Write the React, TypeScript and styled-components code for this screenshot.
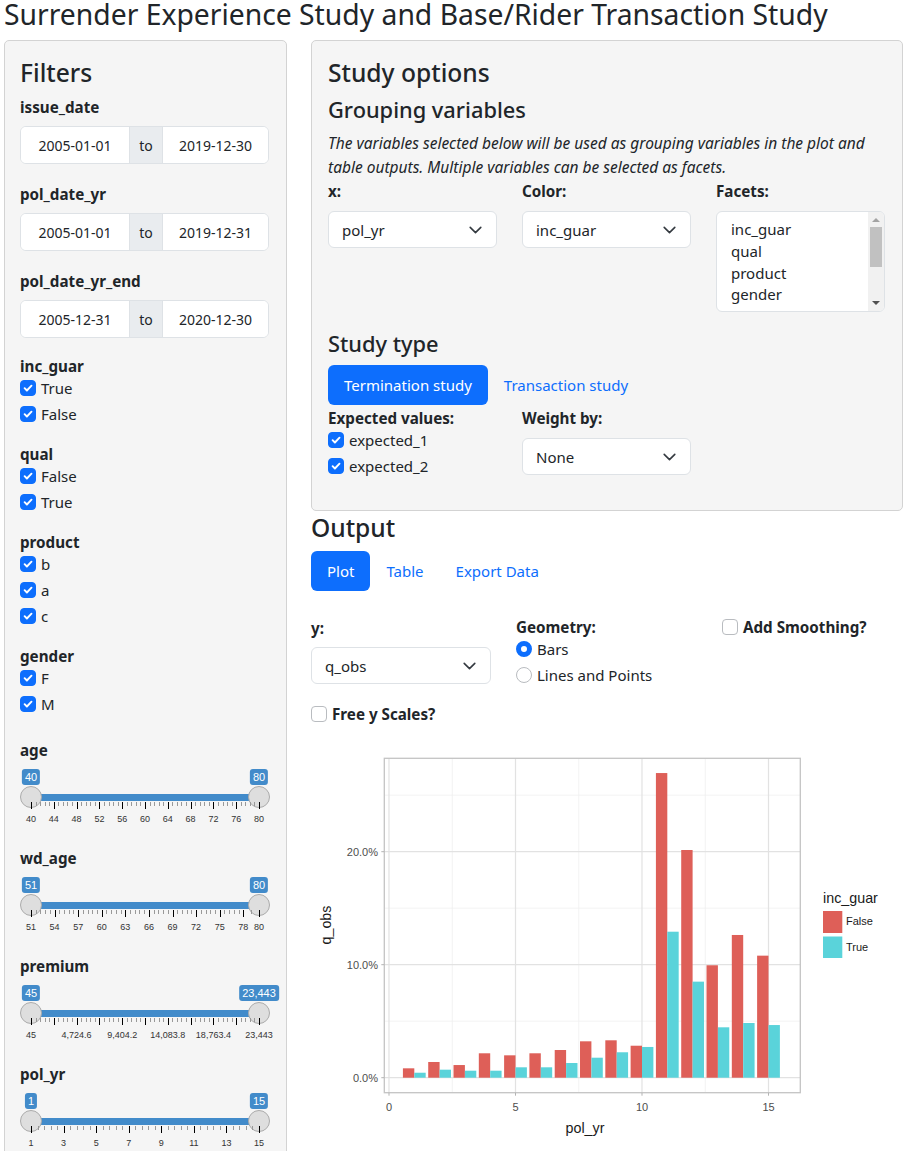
import React from "react";
import styled, { createGlobalStyle } from "styled-components";

const GlobalStyle = createGlobalStyle`
  * { box-sizing: border-box; }
  body {
    margin: 0;
    font-family: "Noto Sans", "Open Sans", sans-serif;
    font-size: 15px;
    color: #212529;
    background: #fff;
  }
`;

type Tick = { at: number; label?: string; major?: boolean };

const range = (n: number) => Array.from({ length: n }, (_, i) => i);

// major ticks from the given list, small ticks spread between them
const buildTicks = (majors: { at: number; label?: string }[]): Tick[] => {
  const out: Tick[] = [];
  majors.forEach((m, i) => {
    out.push({ ...m, major: true });
    const next = majors[i + 1];
    if (!next) return;
    const span = next.at - m.at;
    const parts = span * 228 > 18 ? 5 : 2;
    for (let k = 1; k < parts; k++) out.push({ at: m.at + (span * k) / parts });
  });
  return out;
};

const premiumLabels = ["45", "4,724.6", "9,404.2", "14,083.8", "18,763.4", "23,443"];

const sliders = [
  {
    name: "age",
    from: "40",
    to: "80",
    ticks: buildTicks(range(11).map((i) => ({ at: i / 10, label: String(40 + 4 * i) }))),
  },
  {
    name: "wd_age",
    from: "51",
    to: "80",
    ticks: buildTicks(
      [51, 54, 57, 60, 63, 66, 69, 72, 75, 78, 80].map((v) => ({ at: (v - 51) / 29, label: String(v) }))
    ),
  },
  {
    name: "premium",
    from: "45",
    to: "23,443",
    ticks: buildTicks(
      range(11).map((i) => ({ at: i / 10, label: i % 2 === 0 ? premiumLabels[i / 2] : undefined }))
    ),
  },
  {
    name: "pol_yr",
    from: "1",
    to: "15",
    ticks: buildTicks([1, 3, 5, 7, 9, 11, 13, 15].map((v) => ({ at: (v - 1) / 14, label: String(v) }))),
  },
];

const checkGroups = [
  { name: "inc_guar", items: ["True", "False"] },
  { name: "qual", items: ["False", "True"] },
  { name: "product", items: ["b", "a", "c"] },
  { name: "gender", items: ["F", "M"] },
];

const dateRanges = [
  { name: "issue_date", from: "2005-01-01", to: "2019-12-30" },
  { name: "pol_date_yr", from: "2005-01-01", to: "2019-12-31" },
  { name: "pol_date_yr_end", from: "2005-12-31", to: "2020-12-30" },
];

// [False, True] q_obs in percent by pol_yr
const bars: [number, number][] = [
  [0.83, 0.44],
  [1.39, 0.71],
  [1.12, 0.62],
  [2.16, 0.62],
  [1.98, 0.92],
  [2.16, 0.92],
  [2.45, 1.3],
  [3.22, 1.77],
  [3.31, 2.25],
  [2.83, 2.72],
  [26.96, 12.92],
  [20.15, 8.5],
  [9.95, 4.46],
  [12.63, 4.84],
  [10.8, 4.66],
];

const App: React.FC = () => {
  return (
    <Page>
      <GlobalStyle />
      <Title>Surrender Experience Study and Base/Rider Transaction Study</Title>
      <Layout>
        <Sidebar>
          <PanelTitle $mb={8}>Filters</PanelTitle>
          {dateRanges.map((d) => (
            <Group key={d.name}>
              <Label $lh={24} $mb={7}>
                {d.name}
              </Label>
              <DateRange>
                <DateCell>{d.from}</DateCell>
                <DateCell $addon>to</DateCell>
                <DateCell>{d.to}</DateCell>
              </DateRange>
            </Group>
          ))}
          {checkGroups.map((g) => (
            <Group key={g.name}>
              <Label $lh={20}>{g.name}</Label>
              <Stack>
                {g.items.map((it) => (
                  <CheckRow key={it}>
                    <CheckBox checked />
                    {it}
                  </CheckRow>
                ))}
              </Stack>
            </Group>
          ))}
          {sliders.map((s) => (
            <SliderGroup key={s.name}>
              <Label $lh={20}>{s.name}</Label>
              <RangeSlider from={s.from} to={s.to} ticks={s.ticks} />
            </SliderGroup>
          ))}
        </Sidebar>

        <Main>
          <OptionsWell>
            <PanelTitle $mb={10}>Study options</PanelTitle>
            <SubTitle>Grouping variables</SubTitle>
            <Note>
              The variables selected below will be used as grouping variables in the plot and
              <br />
              table outputs. Multiple variables can be selected as facets.
            </Note>
            <ThreeCols>
              <div>
                <Label $lh={24} $mb={8}>
                  x:
                </Label>
                <Select value="pol_yr" />
              </div>
              <div>
                <Label $lh={24} $mb={8}>
                  Color:
                </Label>
                <Select value="inc_guar" />
              </div>
              <div>
                <Label $lh={24} $mb={8}>
                  Facets:
                </Label>
                <MultiSelect>
                  <MultiList>
                    <div>inc_guar</div>
                    <div>qual</div>
                    <div>product</div>
                    <div>gender</div>
                    <div>age</div>
                  </MultiList>
                  <ScrollTrack>
                    <Arrow $dir="up" />
                    <Thumb />
                    <Arrow $dir="down" />
                  </ScrollTrack>
                </MultiSelect>
              </div>
            </ThreeCols>

            <SubTitle $mt={19}>Study type</SubTitle>
            <PillRow $mt={8}>
              <Pill $active>Termination study</Pill>
              <Pill>Transaction study</Pill>
            </PillRow>
            <ThreeCols $mt={3}>
              <div>
                <Label $lh={20}>Expected values:</Label>
                <Stack>
                  <CheckRow>
                    <CheckBox checked />
                    expected_1
                  </CheckRow>
                  <CheckRow>
                    <CheckBox checked />
                    expected_2
                  </CheckRow>
                </Stack>
              </div>
              <div>
                <Label $lh={20} $mb={10}>
                  Weight by:
                </Label>
                <Select value="None" />
              </div>
            </ThreeCols>
          </OptionsWell>

          <PanelTitle $mt={2} $mb={9}>
            Output
          </PanelTitle>
          <PillRow>
            <Pill $active>Plot</Pill>
            <Pill>Table</Pill>
            <Pill>Export Data</Pill>
          </PillRow>

          <OutputCols>
            <div>
              <Label $lh={20} $mb={9}>
                y:
              </Label>
              <Select value="q_obs" $width={180} />
            </div>
            <div>
              <Label $lh={19}>Geometry:</Label>
              <Stack>
                <CheckRow>
                  <RadioDot $checked />
                  Bars
                </CheckRow>
                <CheckRow>
                  <RadioDot />
                  Lines and Points
                </CheckRow>
              </Stack>
            </div>
            <SmoothCell>
              <CheckRow $bold>
                <CheckBox />
                Add Smoothing?
              </CheckRow>
            </SmoothCell>
          </OutputCols>
          <FreeRow $bold>
            <CheckBox />
            Free y Scales?
          </FreeRow>

          <Chart />
        </Main>
      </Layout>
    </Page>
  );
};

export default App;

const CheckBox: React.FC<{ checked?: boolean }> = ({ checked }) => (
  <Box $checked={checked}>
    {checked && (
      <svg width="12" height="12" viewBox="0 0 12 12">
        <path d="M2.6 6.2l2.3 2.3 4.6-4.8" fill="none" stroke="#fff" strokeWidth="1.9" strokeLinecap="round" strokeLinejoin="round" />
      </svg>
    )}
  </Box>
);

const Select: React.FC<{ value: string; $width?: number }> = ({ value, $width }) => (
  <SelectBox $width={$width}>
    <span>{value}</span>
    <svg width="13" height="8" viewBox="0 0 13 8">
      <path d="M1.2 1.4l5.3 5.2 5.3-5.2" fill="none" stroke="#343a40" strokeWidth="1.6" strokeLinecap="round" strokeLinejoin="round" />
    </svg>
  </SelectBox>
);

const RangeSlider: React.FC<{ from: string; to: string; ticks: Tick[] }> = ({ from, to, ticks }) => (
  <SliderBox>
    <Bubble style={{ left: 11 }}>{from}</Bubble>
    <Bubble style={{ left: 239 }}>{to}</Bubble>
    <Bar />
    <Handle style={{ left: 0 }} />
    <Handle style={{ left: 228 }} />
    {ticks.map((t, i) => (
      <React.Fragment key={i}>
        <TickMark $major={t.major} style={{ left: 11 + t.at * 228 }} />
        {t.label && <TickLabel style={{ left: 11 + t.at * 228 }}>{t.label}</TickLabel>}
      </React.Fragment>
    ))}
  </SliderBox>
);

const px = (v: number) => 78 + 25.3 * v;
const py = (p: number) => 347.7 - 11.3 * p;

const Chart: React.FC = () => (
  <ChartSvg width="592" height="421" viewBox="0 0 592 421">
    <rect x="73.3" y="28.3" width="416" height="334.4" fill="#fff" />
    {[5, 15, 25].map((p) => (
      <line key={"ym" + p} x1="73.3" x2="489.3" y1={py(p)} y2={py(p)} stroke="#f0f0f0" strokeWidth="0.8" />
    ))}
    {[2.5, 7.5, 12.5].map((v) => (
      <line key={"xm" + v} x1={px(v)} x2={px(v)} y1="28.3" y2="362.7" stroke="#f0f0f0" strokeWidth="0.8" />
    ))}
    {[0, 10, 20].map((p) => (
      <line key={"yM" + p} x1="73.3" x2="489.3" y1={py(p)} y2={py(p)} stroke="#e2e2e2" strokeWidth="1.2" />
    ))}
    {[0, 5, 10, 15].map((v) => (
      <line key={"xM" + v} x1={px(v)} x2={px(v)} y1="28.3" y2="362.7" stroke="#e2e2e2" strokeWidth="1.2" />
    ))}
    {bars.map(([f, t], i) => {
      const v = i + 1;
      return (
        <g key={v}>
          <rect x={px(v - 0.45)} y={py(f)} width={25.3 * 0.45} height={py(0) - py(f)} fill="#de5f58" />
          <rect x={px(v)} y={py(t)} width={25.3 * 0.45} height={py(0) - py(t)} fill="#5ad3da" />
        </g>
      );
    })}
    <rect x="73.3" y="28.3" width="416" height="334.4" fill="none" stroke="#c4c4c4" strokeWidth="1.3" />
    {[0, 10, 20].map((p) => (
      <g key={"yl" + p}>
        <line x1="70.3" x2="73.3" y1={py(p)} y2={py(p)} stroke="#b3b3b3" strokeWidth="1" />
        <AxisText x="67" y={py(p) + 4} textAnchor="end">
          {p.toFixed(1)}%
        </AxisText>
      </g>
    ))}
    {[0, 5, 10, 15].map((v) => (
      <g key={"xl" + v}>
        <line x1={px(v)} x2={px(v)} y1="362.7" y2="365.7" stroke="#b3b3b3" strokeWidth="1" />
        <AxisText x={px(v)} y="380.8" textAnchor="middle">
          {v}
        </AxisText>
      </g>
    ))}
    <TitleText x="274" y="403" textAnchor="middle">
      pol_yr
    </TitleText>
    <TitleText x="0" y="0" textAnchor="middle" transform="translate(20 195) rotate(-90)">
      q_obs
    </TitleText>
    <TitleText x="512" y="173">
      inc_guar
    </TitleText>
    <rect x="512" y="181" width="19.3" height="22" fill="#de5f58" />
    <rect x="512" y="206.5" width="19.3" height="21.5" fill="#5ad3da" />
    <LegendText x="535" y="195">
      False
    </LegendText>
    <LegendText x="535" y="221">
      True
    </LegendText>
  </ChartSvg>
);

const Page = styled.div`
  padding: 0 15px 0 4px;
`;

const Title = styled.h1`
  margin: 0 0 11px;
  font-size: 28.3px;
  font-weight: 400;
  line-height: 29px;
  white-space: nowrap;
`;

const Layout = styled.div`
  display: flex;
  align-items: flex-start;
  gap: 24px;
`;

const Sidebar = styled.aside`
  flex: none;
  width: 283px;
  padding: 17px 17px 20px 15px;
  background: #f5f5f5;
  border: 1px solid #d3d3d3;
  border-radius: 5px;
`;

const Main = styled.main`
  flex: 1;
  min-width: 0;
`;

const OptionsWell = styled.section`
  padding: 17px 16px 32px;
  background: #f5f5f5;
  border: 1px solid #d3d3d3;
  border-radius: 5px;
`;

const PanelTitle = styled.h3<{ $mt?: number; $mb?: number }>`
  margin: ${(p) => p.$mt ?? 0}px 0 ${(p) => p.$mb ?? 0}px;
  font-size: 24.6px;
  font-weight: 500;
  line-height: 29px;
`;

const SubTitle = styled.h4<{ $mt?: number }>`
  margin: ${(p) => p.$mt ?? 0}px 0 0;
  font-size: 21.8px;
  font-weight: 500;
  line-height: 26px;
`;

const Note = styled.p`
  margin: 8px 0 0;
  font-size: 15.5px;
  font-style: italic;
  line-height: 24px;
  white-space: nowrap;
`;

const Label = styled.div<{ $lh: number; $mb?: number }>`
  font-size: 15.2px;
  font-weight: 700;
  line-height: ${(p) => p.$lh}px;
  margin-bottom: ${(p) => p.$mb ?? 0}px;
`;

const Group = styled.div`
  margin-bottom: 18px;
`;

const SliderGroup = styled.div`
  padding-top: 6px;
  margin-bottom: 12px;
`;

const DateRange = styled.div`
  display: grid;
  grid-template-columns: 108px 34px 1fr;
  width: 249px;
  height: 38px;
  background: #fff;
  border: 1px solid #dee2e6;
  border-radius: 6px;
  overflow: hidden;
  font-size: 14px;
`;

const DateCell = styled.div<{ $addon?: boolean }>`
  display: flex;
  align-items: center;
  justify-content: center;
  background: ${(p) => (p.$addon ? "#e9ecef" : "#fff")};
  border-left: ${(p) => (p.$addon ? "1px solid #dee2e6" : "none")};
  border-right: ${(p) => (p.$addon ? "1px solid #dee2e6" : "none")};
`;

const Stack = styled.div`
  display: flex;
  flex-direction: column;
  gap: 2px;
`;

const CheckRow = styled.label<{ $bold?: boolean }>`
  display: flex;
  align-items: center;
  gap: 5px;
  height: 24px;
  font-size: ${(p) => (p.$bold ? "15.2px" : "15px")};
  font-weight: ${(p) => (p.$bold ? 700 : 400)};
`;

const FreeRow = styled(CheckRow)`
  margin-top: 15px;
`;

const Box = styled.span<{ $checked?: boolean }>`
  flex: none;
  display: inline-flex;
  align-items: center;
  justify-content: center;
  width: 16px;
  height: 16px;
  border-radius: 4px;
  background: ${(p) => (p.$checked ? "#0d6efd" : "#fff")};
  border: 1px solid ${(p) => (p.$checked ? "#0d6efd" : "#b9bcc0")};
`;

const RadioDot = styled.span<{ $checked?: boolean }>`
  flex: none;
  width: 16px;
  height: 16px;
  border-radius: 50%;
  background: #fff;
  border: ${(p) => (p.$checked ? "5px solid #0d6efd" : "1px solid #b9bcc0")};
`;

const SliderBox = styled.div`
  position: relative;
  width: 249px;
  height: 70px;
  font-family: "Liberation Sans", Arial, sans-serif;
`;

const Bar = styled.div`
  position: absolute;
  left: 11px;
  width: 228px;
  top: 34px;
  height: 7px;
  background: #428bca;
`;

const Handle = styled.div`
  position: absolute;
  top: 26px;
  width: 22px;
  height: 22px;
  border-radius: 50%;
  background: #dedede;
  border: 1px solid #ababab;
`;

const Bubble = styled.div`
  position: absolute;
  top: 9px;
  transform: translateX(-50%);
  padding: 1px 3px;
  font-size: 11px;
  line-height: 14px;
  color: #fff;
  background: #428bca;
  border-radius: 3px;
  white-space: nowrap;
`;

const TickMark = styled.div<{ $major?: boolean }>`
  position: absolute;
  top: 42px;
  width: 1px;
  height: ${(p) => (p.$major ? 7 : 4)}px;
  background: ${(p) => (p.$major ? "#000" : "#999")};
`;

const TickLabel = styled.div`
  position: absolute;
  top: 53px;
  transform: translateX(-50%);
  font-size: 9px;
  line-height: 12px;
  color: #333;
  white-space: nowrap;
`;

const ThreeCols = styled.div<{ $mt?: number }>`
  display: grid;
  grid-template-columns: repeat(3, 169px);
  column-gap: 25px;
  margin-top: ${(p) => p.$mt ?? 0}px;
`;

const SelectBox = styled.div<{ $width?: number }>`
  display: flex;
  align-items: center;
  justify-content: space-between;
  width: ${(p) => p.$width ?? 169}px;
  height: 37px;
  padding: 0 14px 0 13px;
  background: #fff;
  border: 1px solid #dee2e6;
  border-radius: 6px;
  font-size: 15px;
`;

const MultiSelect = styled.div`
  display: flex;
  width: 169px;
  height: 101px;
  background: #fff;
  border: 1px solid #dee2e6;
  border-radius: 6px;
  overflow: hidden;
`;

const MultiList = styled.div`
  flex: 1;
  padding: 7px 0 0 14px;
  font-size: 15px;
  line-height: 21.8px;
  overflow: hidden;
`;

const ScrollTrack = styled.div`
  display: flex;
  flex-direction: column;
  align-items: center;
  width: 16px;
  background: #f1f1f1;
`;

const Arrow = styled.div<{ $dir: "up" | "down" }>`
  width: 0;
  height: 0;
  margin: ${(p) => (p.$dir === "up" ? "6px 0 5px" : "auto 0 6px")};
  border-left: 4px solid transparent;
  border-right: 4px solid transparent;
  ${(p) =>
    p.$dir === "up" ? "border-bottom: 4px solid #a3a3a3;" : "border-top: 4px solid #505050;"}
`;

const Thumb = styled.div`
  width: 12px;
  height: 40px;
  background: #c1c1c1;
`;

const PillRow = styled.div<{ $mt?: number }>`
  display: flex;
  margin-top: ${(p) => p.$mt ?? 0}px;
`;

const Pill = styled.span<{ $active?: boolean }>`
  display: inline-flex;
  align-items: center;
  height: 40px;
  padding: 0 16px;
  border-radius: 6px;
  font-size: 15px;
  color: ${(p) => (p.$active ? "#fff" : "#0d6efd")};
  background: ${(p) => (p.$active ? "#0d6efd" : "transparent")};
`;

const OutputCols = styled.div`
  display: grid;
  grid-template-columns: 180px 181px 1fr;
  column-gap: 25px;
  margin-top: 27px;
`;

const SmoothCell = styled.div`
  margin-top: -3px;
`;

const ChartSvg = styled.svg`
  display: block;
  margin-top: 4px;
  font-family: "Liberation Sans", Arial, sans-serif;
`;

const AxisText = styled.text`
  font-size: 11px;
  fill: #4d4d4d;
`;

const TitleText = styled.text`
  font-size: 14.3px;
  fill: #1a1a1a;
`;

const LegendText = styled.text`
  font-size: 11px;
  fill: #1a1a1a;
`;
